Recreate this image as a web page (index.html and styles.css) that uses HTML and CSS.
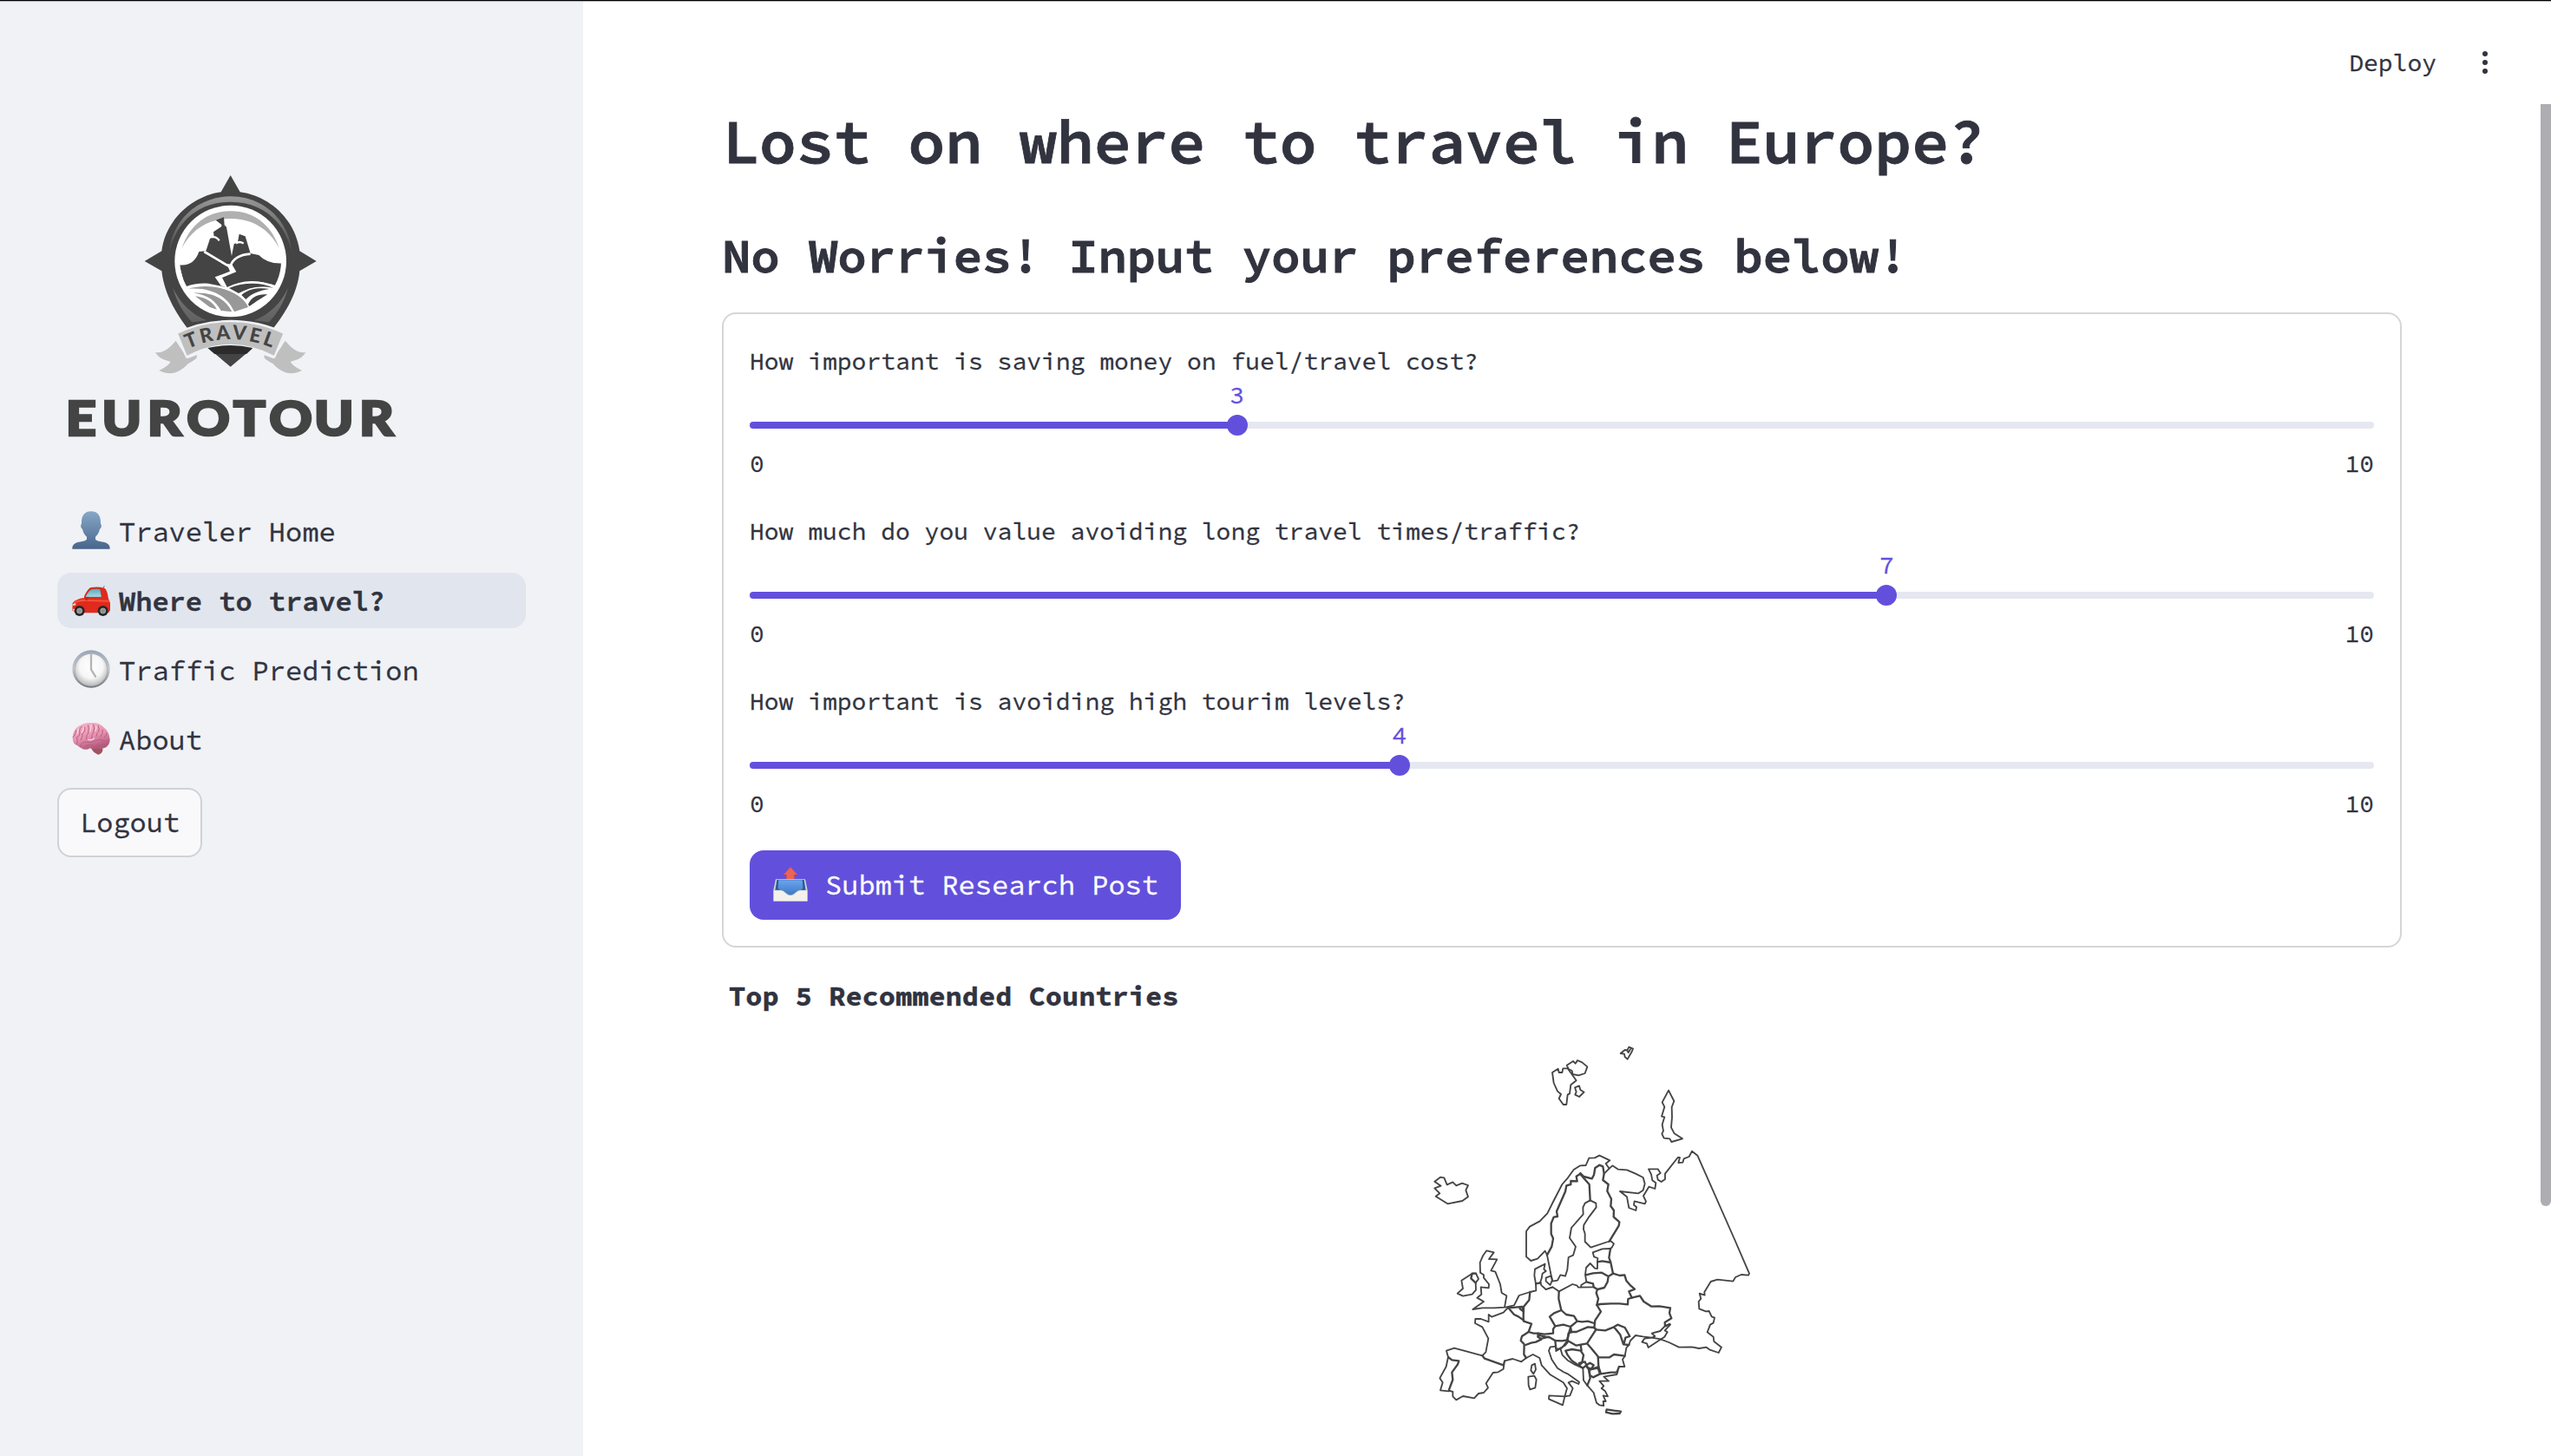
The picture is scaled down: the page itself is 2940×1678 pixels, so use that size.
FILE: index.html
```html
<!DOCTYPE html>
<html lang="en">
<head>
<meta charset="utf-8">
<title>EuroTour</title>
<link rel="stylesheet" href="styles.css">
</head>
<body>
<div class="app">
  <aside class="sidebar">
    <svg class="logo" viewBox="0 0 1260 1050" role="img" aria-label="EuroTour Travel">
      <defs>
        <linearGradient id="rim" x1="0" y1="0" x2="0" y2="1"><stop offset="0" stop-color="#999"/><stop offset="1" stop-color="#444"/></linearGradient>
        <linearGradient id="rimLow" x1="0" y1="0" x2="0" y2="1"><stop offset="0" stop-color="#777"/><stop offset="1" stop-color="#606060"/></linearGradient>
        <path id="ribbonArc" d="M470 666Q617 600 768 666"/>
        <clipPath id="disc"><circle cx="617" cy="363" r="175"/></clipPath>
      </defs>
      <path fill="#444" d="M617 66L650 124C750 138 840 215 856 328L914 363L856 397C848 480 800 555 745 620L617 728L488 620C434 555 388 480 379 397L320 363L379 328C392 220 485 138 584 124Z"/>
      <path fill="url(#rim)" d="M403 345C410 225 500 139 617 139C734 139 824 225 831 345C812 235 735 158 617 158C499 158 422 235 403 345Z"/>
      <path fill="url(#rimLow)" d="M418 455C440 505 480 545 535 568L484 574C452 540 430 500 418 455ZM816 455C794 505 754 545 699 568L750 574C782 540 804 500 816 455Z"/>
      <circle cx="617" cy="363" r="193" fill="#fff"/>
      <path fill="#b0b0b0" d="M449 318C475 238 535 190 617 190C699 190 759 238 785 318C750 250 690 216 617 216C544 216 484 250 449 318Z"/>
      <g clip-path="url(#disc)">
        <path fill="#444" d="M532 328L546 285L560 279L558 262L586 243V237L566 221L594 211L596 238L603 245L621 345L629 304L642 297L647 269L668 277L686 336L715 342Q745 374 800 370L780 450Q690 415 606 454L540 440Q495 438 460 452L440 376Q490 382 508 330Z"/>
        <path fill="none" stroke="#fff" stroke-width="8" d="M526 330L610 380M686 338C650 340 622 355 617 382"/>
        <path fill="none" stroke="#fff" stroke-width="7" d="M552 280Q568 276 578 292M636 302Q648 292 662 302"/>
        <path fill="#fff" d="M604 372L622 374L637 400L588 420L607 456L584 448L563 418L615 398Z"/>
        <path fill="#989898" d="M470 458C570 432 660 475 678 522L630 538C605 480 545 452 470 458Z"/>
        <path fill="#989898" d="M490 473C560 470 600 495 622 538L584 534C565 500 540 480 490 473ZM495 484C530 488 555 502 570 530L545 522Z"/>
        <path fill="none" stroke="#fff" stroke-width="9" d="M606 458C660 430 720 430 768 455"/>
        <path fill="#444" d="M612 456C660 435 725 435 766 456C715 445 680 455 645 474ZM655 480C685 455 720 455 752 459C715 465 690 475 670 495ZM678 512C690 485 715 475 745 478C725 490 710 500 682 519Z"/>
      </g>
      <path fill="#bfbfbf" d="M428 638L468 700L500 688C505 700 490 706 470 718C440 750 410 760 370 741C390 730 405 722 409 710C390 705 370 700 357 678C385 682 405 664 428 638ZM806 638L766 700L734 688C729 700 744 706 764 718C794 750 824 760 864 741C844 730 829 722 825 710C844 705 864 700 877 678C849 682 829 664 806 638Z"/>
      <path fill="#bfbfbf" stroke="#f0f2f6" stroke-width="7" d="M431 612C545 556 689 556 803 612L769 694C670 640 564 640 465 694Z"/>
      <path fill="#2b2b2b" d="M538 663Q617 645 694 663L672 684H562Z"/>
      <text class="logo-ribbon"><textPath href="#ribbonArc" textLength="298" lengthAdjust="spacing">TRAVEL</textPath></text>
      <text class="logo-name" transform="scale(1.120 1)" y="967" x="42 154 294 416 560 670 809 948">EUROTOUR</text>
    </svg>
    <nav class="nav">
      <a class="nav-item">
        <svg class="emoji" viewBox="0 0 132 132"><defs><linearGradient id="bust" x1="0" y1="0" x2="0" y2="1"><stop offset="0" stop-color="#87a8c8"/><stop offset="1" stop-color="#48658b"/></linearGradient></defs><path fill="url(#bust)" d="M66 1C88 1 100 14 99 44C104 48 101 60 96 62C93 76 86 84 81 89V98C88 106 108 104 120 111C130 117 131 124 131 131H1C1 124 2 117 12 111C24 104 44 106 51 98V89C46 84 39 76 36 62C31 60 28 48 33 44C32 14 44 1 66 1Z"/></svg>
        <span>Traveler Home</span>
      </a>
      <a class="nav-item active">
        <svg class="emoji" viewBox="0 0 132 132"><defs><linearGradient id="glass" x1="0" y1="0" x2="0" y2="1"><stop offset="0" stop-color="#5aa3b4"/><stop offset="1" stop-color="#a5dfe6"/></linearGradient></defs><path stroke="#777" stroke-width="3" d="M106 30L112 18"/><path fill="#df2a1c" d="M42 54Q56 26 66 24Q90 20 112 26Q121 30 126 63L132 78V103L126 112H20L1 104L2 78Q12 64 42 60Z"/><path fill="#f5523c" d="M5 76Q25 62 52 66L128 68V74L52 72Q24 70 5 80Z"/><path fill="url(#glass)" stroke="#b3231a" stroke-width="2" d="M45 58Q58 32 68 29Q84 26 98 29L103 58Z"/><path fill="#d42018" d="M44 58L56 56L55 68H46Z"/><path fill="#f6d2c4" d="M3 82L12 78L14 84L4 88ZM2 98H14V104H3Z"/><g fill="#262626"><circle cx="26" cy="105" r="18"/><circle cx="107" cy="105" r="18"/></g><g fill="#8f8f8f" stroke="#c7c7c7" stroke-width="2"><circle cx="26" cy="105" r="9"/><circle cx="107" cy="105" r="9"/></g></svg>
        <span>Where to travel?</span>
      </a>
      <a class="nav-item">
        <svg class="emoji" viewBox="0 0 132 132"><defs><linearGradient id="bezel" x1="0" y1="0" x2="0" y2="1"><stop offset="0" stop-color="#9aa6b8"/><stop offset=".5" stop-color="#c4c6ca"/><stop offset="1" stop-color="#70757a"/></linearGradient><radialGradient id="dial" cx=".5" cy=".4" r=".6"><stop offset="0" stop-color="#fff"/><stop offset=".6" stop-color="#f6f6f6"/><stop offset="1" stop-color="#b8b8b8"/></radialGradient></defs><circle cx="66" cy="66" r="65" fill="url(#bezel)"/><circle cx="66" cy="69" r="56" fill="url(#dial)" stroke="#a4a8ae" stroke-width="2"/><path d="M66 16V68L81 92" fill="none" stroke="#b5b5b5" stroke-width="7" stroke-linecap="round" stroke-linejoin="round"/></svg>
        <span>Traffic Prediction</span>
      </a>
      <a class="nav-item">
        <svg class="emoji" viewBox="0 0 132 132"><defs><linearGradient id="lobe" x1="0" y1="0" x2=".4" y2="1"><stop offset="0" stop-color="#f8b9cc"/><stop offset=".6" stop-color="#e691b0"/><stop offset="1" stop-color="#b35a7d"/></linearGradient></defs><path fill="#a3525f" d="M66 100Q80 96 106 100Q108 118 92 122Q76 120 66 100Z"/><path fill="url(#lobe)" d="M30 98Q22 96 16 88Q2 86 2 62Q4 34 26 22Q44 10 66 12Q94 10 110 28Q128 42 131 68Q132 92 110 100Q76 106 62 100Q46 110 30 98Z"/><path fill="none" stroke="#b9607f" stroke-width="3" stroke-linecap="round" d="M4 62Q14 50 14 38M16 88Q22 74 16 62Q30 58 26 40Q26 30 34 24M30 72Q38 60 36 48Q46 44 44 28M30 96Q28 80 46 78Q66 84 80 74Q94 66 112 74M50 68Q48 54 56 48Q60 34 56 20M68 66Q66 54 74 46Q80 34 74 18M84 58Q84 48 92 42Q96 34 90 22M98 60Q108 50 106 36M44 92Q62 84 78 92Q94 84 110 90M112 62Q120 58 120 48M112 74Q126 78 128 70"/><path fill="none" stroke="#fcd3df" stroke-width="4" stroke-linecap="round" d="M22 34Q20 44 18 50M40 30Q38 40 34 46M66 20Q66 34 62 42M84 24Q86 34 80 40M56 70Q68 74 76 66"/></svg>
        <span>About</span>
      </a>
    </nav>
    <button class="btn btn-secondary">Logout</button>
  </aside>

  <main class="main">
    <header class="toolbar">
      <span class="deploy">Deploy</span>
      <span class="kebab"><i></i><i></i><i></i></span>
    </header>
    <div class="content">
      <h1>Lost on where to travel in Europe?</h1>
      <h2>No Worries! Input your preferences below!</h2>
      <form class="form">
        <div class="slider" style="--value:30%">
          <label class="slider-label">How important is saving money on fuel/travel cost?</label>
          <div class="slider-value"><span>3</span></div>
          <div class="track"><div class="fill"></div><div class="thumb"></div></div>
          <div class="range"><span>0</span><span>10</span></div>
        </div>
        <div class="slider" style="--value:70%">
          <label class="slider-label">How much do you value avoiding long travel times/traffic?</label>
          <div class="slider-value"><span>7</span></div>
          <div class="track"><div class="fill"></div><div class="thumb"></div></div>
          <div class="range"><span>0</span><span>10</span></div>
        </div>
        <div class="slider" style="--value:40%">
          <label class="slider-label">How important is avoiding high tourim levels?</label>
          <div class="slider-value"><span>4</span></div>
          <div class="track"><div class="fill"></div><div class="thumb"></div></div>
          <div class="range"><span>0</span><span>10</span></div>
        </div>
        <button type="button" class="btn btn-primary">
          <svg class="outbox" viewBox="0 0 120 120"><defs><linearGradient id="tray" x1="0" y1="0" x2="0" y2="1"><stop offset="0" stop-color="#6ba4ee"/><stop offset="1" stop-color="#3c78c4"/></linearGradient></defs><path fill="#ec6455" stroke="#c94a40" stroke-width="1.500" d="M60 1L84 27H73V44H46V27H36Z"/><path fill="#d9d6c8" d="M9 43H111L119 81H1Z"/><path fill="#2a5c98" d="M13 45H107L113 81H7Z"/><path fill="url(#tray)" d="M19 46H101L103 74L75 98H45L17 74Z"/><path fill="#f2f1ed" stroke="#bbb9b4" stroke-width="1.500" d="M1 81H26C40 81 44 98 60 98C76 98 80 81 94 81H119V117Q119 119 117 119H3Q1 119 1 117Z"/></svg>
          <span>Submit Research Post</span>
        </button>
      </form>
      <p class="chart-title">Top 5 Recommended Countries</p>
      <svg class="map" viewBox="0 0 1230 1350" role="img" aria-label="Map of Europe">
        <g class="islands">
          <path d="M90 500L103 502L113 526L133 517L145 529L165 521L186 528L178 545L186 568L166 582L115 592L74 566L88 556L70 538L92 530L70 515Z"/>
          <path d="M477 138L497 125L500 138L511 138L514 124L530 124L560 166L541 181L537 211L530 215L526 249L515 249L500 228L507 213L495 203L482 174Z"/>
          <path d="M527 113L549 99L557 107L564 96L580 103L598 118L590 141L568 148L547 144L545 132L533 126Z"/>
          <path d="M555 190L570 184L574 198L587 206L570 222L556 215L560 205Z"/>
          <path d="M713 72L728 60L736 62L742 50L756 56L752 66L737 92L728 84L726 74ZM735 60L740 69L747 58"/>
          <path d="M879 200L898 237L890 258L891 292L888 328L899 349L927 367L889 378L883 367L863 365L856 350L861 340L857 318L865 292L855 290L865 257L857 241Z"/>
        </g>
        <g class="nordics">
          <path d="M459 769L452 755L426 782L403 789L387 775L387 687L399 671L434 652L460 625L480 585L511 525L531 502L551 474L574 460L593 459L604 434L624 433L640 425L676 442L662 453L674 470"/>
          <path class="border" d="M574 488L560 497L563 514L541 513L541 525L526 529L522 550L492 618L495 636L482 638L473 660L473 696L480 712L475 740L459 769"/>
          <path class="border" d="M574 486L586 498L614 505L621 492L625 468L640 458L652 463L656 488L652 510L671 525L667 548L681 575L679 600L690 615L689 637L709 655L707 668L674 722"/>
          <path d="M656 488L674 470L685 460L705 473L735 475L765 488L791 501L797 523L791 545L775 556L711 549L735 568L742 606L766 615L768 603L759 596L761 583L797 592L801 584L792 565L811 533L832 540L835 520L823 511L819 490L810 472L842 472L851 486L839 494L842 509L854 516L867 507L867 488L911 432L918 432L913 450L928 449L932 436L950 429L960 410L979 425L1108 717L1158 833L1155 839L1130 837L1110 846L1102 860L1048 854L1025 861L1003 897L1004 908L986 902L991 920L983 930L985 955L1008 964L1019 963L1028 982L1038 986L1034 1004L1023 1010L1013 1036L1034 1052L1036 1068L1062 1088L1052 1107L1020 1096L1010 1088L984 1092L960 1087L915 1088L880 1071L851 1060"/>
          <path class="border" d="M574 490L605 525L608 580"/>
          <path d="M608 580L590 590L583 605L584 628L543 675L537 710L558 740L549 770L533 777L529 820L522 842L505 838L495 857L477 860L459 769"/>
          <path d="M608 580L628 590L629 604L604 637L586 665L585 680L590 695L590 723L610 743L670 723L678 720L690 730L683 743L678 747"/>
        </g>
        <g class="mainland" transform="translate(0 630)">
          <path d="M633 163L634 150L621 145L617 130L650 118L678 117"/>
          <path class="border" d="M678 117L673 148L679 165L650 160L633 163M679 165L687 203"/>
          <path d="M633 163L633 186L624 185L608 168L594 183L591 207L595 232L577 243L577 250"/>
          <path class="border" d="M593 208L618 202L648 200L671 213L687 203M671 213L668 232L657 252L633 258L620 250L618 238L595 232"/>
          <path class="border" d="M687 203L710 210L727 208L733 228L748 245L762 257L742 265L752 287L739 291L738 310L710 307L680 307L642 309L631 312L636 290L629 270L633 258"/>
          <path class="border" d="M752 287L780 280L793 300L820 317L847 316L885 322L882 340L889 358L866 372L867 385L883 378M631 312L645 335L625 365L622 390L628 397"/>
          <path d="M885 380L866 400L875 405L865 422L853 430L809 459L804 445L787 440L796 428L821 425L853 430M883 378L866 385L850 402L821 410L832 420L821 425L790 421L765 417L747 435L742 450"/>
          <path d="M435 235L440 245L455 258L478 250L500 265L547 240L563 245L567 251L622 250"/>
          <path class="border" d="M500 265L499 290L508 330L525 345L552 350L563 368L580 370L600 368L622 375"/>
          <path d="M478 250L455 258M420 238L421 262L400 267L362 279L345 313L315 320"/>
          <path class="border" d="M420 238L437 235M400 267L397 295L378 318L377 355L378 368L405 377L395 405L412 410L428 410L450 413L480 410L480 395L487 385L468 352L483 340L508 330"/>
          <path class="border" d="M487 385L515 380L540 387L563 368M540 387L543 405L560 405L600 388L622 390"/>
          <path d="M420 238L415 210L417 188L430 181L452 170L448 188L455 195L443 203L440 220L435 235M455 218L473 211L477 225L470 243L455 230Z"/>
          <path class="border" d="M325 322L350 320L373 318L378 335L365 325M325 322L345 345L360 352L378 365"/>
          <path d="M325 320L308 338L268 353L257 345L257 370L230 360L211 360L210 375L235 388L256 428L247 475L235 487L180 472L138 461L111 470L117 492M308 520L312 505L340 498L370 508L387 495"/>
          <path class="border" d="M235 487L243 497L308 520M387 495L379 483L380 448L368 435L372 420L395 405"/>
          <path class="border" d="M428 410L427 422L440 430L420 440L404 443L385 450M440 428L465 422L487 435L510 436L528 433L537 400L540 390M428 416L465 424"/>
          <path d="M490 455L470 457L465 470L475 500L495 530L515 543L530 550L570 578L568 585L545 575L533 580L548 600L538 625L520 628L528 600L515 580L470 553L440 520L433 495L410 483L387 495"/>
          <path d="M466 625L520 628L513 658L465 637ZM394 560L415 557L422 570L418 598L400 604L395 590ZM417 515L420 535L412 550L403 538L406 520Z"/>
          <path class="border" d="M487 435L490 465L505 463L515 455L530 435M508 460L490 470"/>
          <path d="M505 463L512 485L530 503L555 518L583 530"/>
          <path class="border" d="M523 470L545 465L575 470L585 485L580 510L570 522L545 505L530 485ZM530 440L520 452M575 450L578 470"/>
          <path class="border" d="M530 433L533 410L545 405M622 390L628 397L610 425L597 445L560 452L530 435M597 445L612 462L635 490L637 525L610 535"/>
          <path class="border" d="M570 513L590 508L595 520L583 530L570 522M595 520L607 512L620 520L612 533L598 528ZM605 535L635 530L642 550L618 562L607 555Z"/>
          <path d="M583 530L585 572L598 590L620 615L630 650L640 658L655 660L653 645L662 645L653 625L669 628L660 610L647 600L655 592L640 575L672 575L655 560L700 552L704 540"/>
          <path class="border" d="M598 590L608 565L603 535L595 520"/>
          <path class="border" d="M628 397L660 400L690 388L712 415L723 448L742 450M690 388L703 380L728 390L745 420L730 425L725 445M637 493L675 493L690 483L728 488M637 525L645 550L680 545L700 545L708 525"/>
          <path d="M742 450L733 460L728 488L720 500L727 525L708 525"/>
          <path class="border" d="M665 673L690 677L714 680L710 687L685 688L663 683Z"/>
          <path d="M120 608L133 612L133 628L145 640L168 627L207 634L222 618L240 615L255 598L248 583L272 546L290 544L308 533L312 505M117 492L110 525L88 565L98 580L90 607L120 610"/>
          <path class="border" d="M117 492L130 502L154 505L150 517L130 545L133 570L120 605"/>
          <path d="M250 124L275 130L258 153L286 154L265 193L280 197L297 240L302 270L319 280L312 320L275 322L235 322L202 327L240 300L217 287L232 275L230 250L257 253L258 240L240 218L240 208L228 200L227 165L237 142Z"/>
          <path d="M200 203L213 203L222 222L212 235L213 260L200 275L168 281L149 272L168 255L163 227L185 213Z"/>
          <path class="border" d="M213 203L200 203L196 220L212 235"/>
        </g>
      </svg>
    </div>
  </main>
  <div class="scrollbar"></div>
  <div class="window-edge"></div>
</div>
</body>
</html>
```
FILE: styles.css
```css
* { box-sizing: border-box; }
html, body { margin: 0; height: 100%; overflow: hidden; }
body {
  background: #fff;
  color: #31333f;
  font: 400 32px/48px "Source Code Pro", "Liberation Mono", monospace;
  -webkit-text-stroke: .3px currentColor;
}
.app { position: relative; display: flex; height: 100vh; overflow: hidden; }

.sidebar {
  flex: 0 0 672px;
  background: #f0f2f6;
  padding: 180px 66px 0;
  display: flex;
  flex-direction: column;
  align-items: flex-start;
}
.logo { width: 420px; height: 350px; margin-left: -6px; display: block; -webkit-text-stroke: 0; }
.logo-ribbon { font: 900 68px Lato, sans-serif; fill: #444; }
.logo-name {
  font: 900 164px Lato, sans-serif;
  fill: #444;
  stroke: #444;
  stroke-width: 8px;
}

.nav { width: 540px; margin-top: 50px; display: flex; flex-direction: column; gap: 16px; }
.nav-item {
  height: 64px;
  padding: 0 16px;
  display: flex;
  align-items: center;
  gap: 10px;
  border-radius: 16px;
}
.nav-item.active { background: #e1e6ee; font-weight: 600; -webkit-text-stroke-width: .6px; }
.emoji { width: 44px; height: 44px; margin: -2px 0 0 1px; flex: none; }
.nav-item > span { white-space: pre; padding-top: 2px; }

.btn {
  height: 80px;
  padding: 0 24px;
  display: inline-flex;
  align-items: center;
  border-radius: 16px;
  border: 2px solid transparent;
  color: inherit;
  font: inherit;
  white-space: pre;
}
.btn-secondary { margin-top: 24px; background: #f9f9fb; border-color: #d0d2d6; }
.btn-primary { background: #6250dd; color: #fff; gap: 20px; }
.outbox { width: 40px; height: 40px; flex: none; margin: -3px 0 0 1px; }

.main { flex: 1; display: flex; flex-direction: column; }
.toolbar {
  height: 119px;
  flex: none;
  padding: 0 73px 0 0;
  display: flex;
  justify-content: flex-end;
  align-items: flex-start;
  gap: 53px;
}
.deploy { font-size: 28px; line-height: 40px; margin-top: 52px; }
.kebab { display: flex; flex-direction: column; gap: 4px; margin-top: 59px; }
.kebab i { width: 6px; height: 6px; border-radius: 50%; background: #31333f; }

.content { padding: 0 172px 0 160px; }
h1 {
  margin: 0;
  font-size: 72px;
  line-height: 88px;
  font-weight: 600;
  letter-spacing: -.36px;
  -webkit-text-stroke-width: .8px;
}
h2 {
  margin: 53px 0 0;
  font-size: 56px;
  line-height: 68px;
  font-weight: 600;
  letter-spacing: -.28px;
  -webkit-text-stroke-width: 1px;
}

.form {
  margin: 32px 0 0;
  height: 732px;
  padding: 30px;
  border: 2px solid #d6d6d9;
  border-radius: 16px;
}
.slider { height: 196px; font-size: 28px; }
.slider-label { display: block; height: 48px; }
.slider-value { height: 30px; line-height: 30px; padding-left: var(--value); color: #6250dd; }
.slider-value span { display: inline-block; transform: translateX(-50%); }
.track { position: relative; height: 8px; margin-top: 16px; border-radius: 4px; background: #e5e8f0; }
.fill { width: var(--value); height: 8px; border-radius: 4px; background: #6250dd; }
.thumb {
  position: absolute;
  top: -8px;
  left: calc(var(--value) - 12px);
  width: 24px;
  height: 24px;
  border-radius: 50%;
  background: #6250dd;
}
.range { display: flex; justify-content: space-between; margin-top: 16px; }

.chart-title { margin: 32px 0 0 8px; font-weight: 700; }
.map { display: block; width: 410px; height: 450px; margin: 18px 0 0 798px; }
.map path {
  fill: none;
  stroke: #444;
  stroke-width: 5.500px;
  stroke-linejoin: round;
  stroke-linecap: round;
}
.map .border { stroke-width: 7px; }

.scrollbar {
  position: absolute;
  right: 0;
  top: 120px;
  width: 12px;
  height: 1270px;
  background: #aeadb2;
  border-radius: 0 0 6px 6px;
}
.window-edge {
  position: absolute;
  inset: 0 0 auto;
  height: 2px;
  background: #b0b0b0;
  border-top: 1px solid #000;
}
```
